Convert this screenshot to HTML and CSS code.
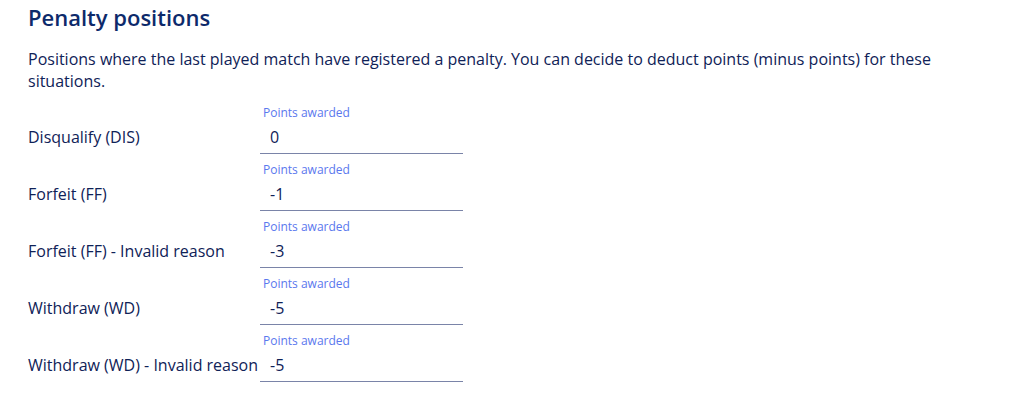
FILE: index.html
```html
<!DOCTYPE html>
<html>
<head>
<meta charset="utf-8">
<link rel="stylesheet" href="styles.css">
</head>
<body>
<section class="panel">
  <h2 class="title">Penalty positions</h2>
  <p class="intro">Positions where the last played match have registered a penalty. You can decide to deduct points (minus points) for these situations.</p>
  <div class="rows">
    <div class="row">
      <div class="row-label">Disqualify (DIS)</div>
      <div class="field"><span class="field-label">Points awarded</span><div class="field-input">0</div></div>
    </div>
    <div class="row">
      <div class="row-label">Forfeit (FF)</div>
      <div class="field"><span class="field-label">Points awarded</span><div class="field-input">-1</div></div>
    </div>
    <div class="row">
      <div class="row-label">Forfeit (FF) - Invalid reason</div>
      <div class="field"><span class="field-label">Points awarded</span><div class="field-input">-3</div></div>
    </div>
    <div class="row">
      <div class="row-label">Withdraw (WD)</div>
      <div class="field"><span class="field-label">Points awarded</span><div class="field-input">-5</div></div>
    </div>
    <div class="row">
      <div class="row-label">Withdraw (WD) - Invalid reason</div>
      <div class="field"><span class="field-label">Points awarded</span><div class="field-input">-5</div></div>
    </div>
  </div>
</section>
</body>
</html>
```

FILE: styles.css
```css
html, body {
  margin: 0;
  padding: 0;
  background: #ffffff;
}
body {
  font-family: "Open Sans", "Liberation Sans", sans-serif;
  color: #0f2257;
}
.panel {
  padding: 3px 0 0 28px;
  width: 925px;
}
.title {
  margin: 0;
  font-size: 22px;
  font-weight: 600;
  line-height: 28px;
  color: #0d2a6b;
}
.intro {
  margin: 17px 0 0 0;
  font-size: 16px;
  line-height: 22px;
}
.rows {
  display: flex;
  flex-direction: column;
  gap: 8px;
  margin-top: 13px;
}
.row {
  display: flex;
  align-items: flex-end;
}
.row-label {
  width: 232px;
  font-size: 16px;
  line-height: 32px;
  margin-bottom: 1px;
  white-space: nowrap;
}
.field {
  width: 203px;
  display: flex;
  flex-direction: column;
}
.field-label {
  font-size: 12px;
  line-height: 16px;
  padding-left: 3px;
  color: #5a78ee;
}
.field-input {
  height: 32px;
  line-height: 32px;
  padding-left: 10px;
  font-size: 16px;
  border-bottom: 1px solid #7a84a8;
}
```
